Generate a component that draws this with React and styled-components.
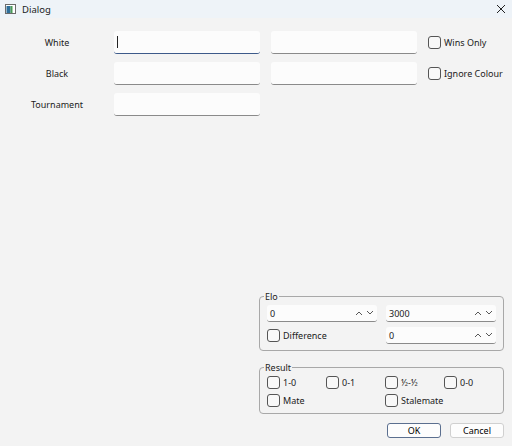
import React from 'react';
import styled, { createGlobalStyle } from 'styled-components';

const Global = createGlobalStyle`
  body { margin: 0; font-family: "Segoe UI", "Noto Sans", "Liberation Sans", sans-serif; font-size: 9px; color: #1b1b1b; }
`;

const Window = styled.div`
  width: 512px; height: 446px; background: #f3f3f3; display: flex; flex-direction: column; overflow: hidden;
`;
const TitleBar = styled.div`
  height: 18px; background: #eef3f8; display: flex; align-items: center; padding: 0 6px 0 5px; gap: 6px; font-size: 9.5px;
`;
const Title = styled.span` flex: 1; `;
const Body = styled.div`
  flex: 1; display: flex; flex-direction: column; padding: 13px 8px 8px 0;
`;
const FormGrid = styled.div`
  display: grid; grid-template-columns: 103px 146px 146px auto; column-gap: 11px; row-gap: 8px; align-items: center;
  margin-left: 0;
  & > *:nth-child(4n+1) { margin-right: -11px; }
`;
const Label = styled.div` text-align: center; `;
const LineEdit = styled.div`
  height: 23px; background: #fcfcfc; border-radius: 3px; border-bottom: 1px solid ${p => p.focus ? '#3d5a8a' : '#8a8a8a'};
  box-sizing: border-box; padding: 4px 3px; display: flex; align-items: center;
`;
const Caret = styled.div` width: 1px; height: 12px; background: #222; `;
const CheckRow = styled.label` display: flex; align-items: center; gap: 3px; white-space: nowrap; `;
const Box = styled.span`
  width: 11px; height: 11px; border: 1px solid #555; border-radius: 3px; background: #f8f8f8; flex-shrink: 0;
`;
const Spacer = styled.div` flex: 1; `;
const Bottom = styled.div` align-self: flex-end; width: 245px; display: flex; flex-direction: column; gap: 10px; `;
const Group = styled.fieldset`
  margin: 0; border: 1px solid #a8a8a8; border-radius: 4px; padding: 2px 7px 6px; display: grid;
  grid-template-columns: ${p => p.cols}; column-gap: 9px; row-gap: 5px; align-items: center;
`;
const Legend = styled.legend` padding: 0 1px; margin-left: -3px; font-size: 9px; `;
const Spin = styled.div`
  height: 17px; background: #fcfcfc; border-radius: 3px; border-bottom: 1px solid #8a8a8a; box-sizing: border-box;
  display: flex; align-items: center; padding: 0 3px; justify-content: space-between;
`;
const Arrows = styled.span` display: flex; gap: 3px; color: #444; `;
const Buttons = styled.div` display: flex; justify-content: flex-end; gap: 9px; margin-top: -1px; `;
const Button = styled.button`
  width: 54px; height: 15px; font: inherit; font-size: 9px; background: #fdfdfd; border-radius: 3px; padding: 0;
  border: 1px solid ${p => p.primary ? '#5b6f8f' : '#d0d0d0'};
`;

const Check = ({ children }) => <CheckRow><Box />{children}</CheckRow>;
const Chevrons = () => (
  <Arrows>
    <svg width="8" height="6" viewBox="0 0 8 6"><path d="M1 5 L4 2 L7 5" fill="none" stroke="#444" strokeWidth="0.9" /></svg>
    <svg width="8" height="6" viewBox="0 0 8 6"><path d="M1 1 L4 4 L7 1" fill="none" stroke="#444" strokeWidth="0.9" /></svg>
  </Arrows>
);
const SpinBox = ({ value }) => <Spin><span>{value}</span><Chevrons /></Spin>;

export default function App() {
  return (
    <Window>
      <Global />
      <TitleBar>
        <svg width="11" height="10" viewBox="0 0 11 10">
          <rect x="0.5" y="0.5" width="10" height="9" fill="#fff" stroke="#6b6b6b" />
          <rect x="1.5" y="2" width="4" height="7" fill="#2f6f9a" />
          <rect x="5.5" y="2" width="2" height="7" fill="#4a9a56" />
        </svg>
        <Title>Dialog</Title>
        <svg width="10" height="10" viewBox="0 0 10 10"><path d="M1 1 L9 9 M9 1 L1 9" stroke="#222" strokeWidth="1" /></svg>
      </TitleBar>
      <Body>
        <FormGrid>
          <Label>White</Label>
          <LineEdit focus><Caret /></LineEdit>
          <LineEdit />
          <Check>Wins Only</Check>
          <Label>Black</Label>
          <LineEdit />
          <LineEdit />
          <Check>Ignore Colour</Check>
          <Label>Tournament</Label>
          <LineEdit />
        </FormGrid>
        <Spacer />
        <Bottom>
          <Group cols="1fr 1fr">
            <Legend>Elo</Legend>
            <SpinBox value="0" />
            <SpinBox value="3000" />
            <Check>Difference</Check>
            <SpinBox value="0" />
          </Group>
          <Group cols="50px 50px 50px 50px">
            <Legend>Result</Legend>
            <Check>1-0</Check>
            <Check>0-1</Check>
            <Check>½-½</Check>
            <Check>0-0</Check>
            <Check>Mate</Check>
            <span />
            <Check>Stalemate</Check>
          </Group>
          <Buttons>
            <Button primary>OK</Button>
            <Button>Cancel</Button>
          </Buttons>
        </Bottom>
      </Body>
    </Window>
  );
}
